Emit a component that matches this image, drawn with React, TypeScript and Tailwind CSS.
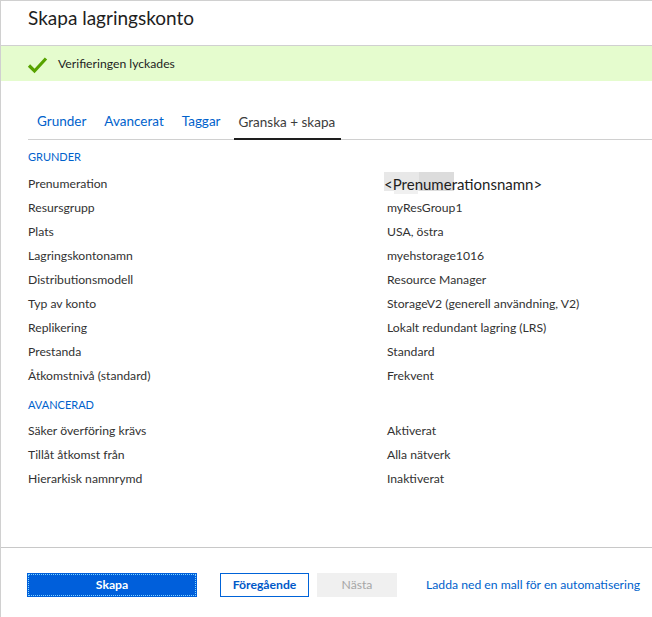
import React from 'react';

const grunder: [string, string][] = [
  ['Prenumeration', '<Prenumerationsnamn>'],
  ['Resursgrupp', 'myResGroup1'],
  ['Plats', 'USA, östra'],
  ['Lagringskontonamn', 'myehstorage1016'],
  ['Distributionsmodell', 'Resource Manager'],
  ['Typ av konto', 'StorageV2 (generell användning, V2)'],
  ['Replikering', 'Lokalt redundant lagring (LRS)'],
  ['Prestanda', 'Standard'],
  ['Åtkomstnivå (standard)', 'Frekvent'],
];

const avancerad: [string, string][] = [
  ['Säker överföring krävs', 'Aktiverat'],
  ['Tillåt åtkomst från', 'Alla nätverk'],
  ['Hierarkisk namnrymd', 'Inaktiverat'],
];

function Row({ label, value }: { label: string; value: string }) {
  const blurred = value.startsWith('<');
  return (
    <div className="flex h-6 items-center">
      <div className="w-[359px] text-[#323232]">{label}</div>
      {blurred ? (
        <span className="relative -ml-[3px] text-[15px] text-[#1e1e1e]">
          {/* redacted-looking blotch behind the name */}
          <span className="absolute left-0 top-[-1px] h-[19px] w-[35px] bg-[#e8e8e8]" />
          <span className="absolute left-[35px] top-[-1px] h-[19px] w-[35px] bg-[#dcdcdc]" />
          <span className="absolute left-[10px] top-[16px] h-[5px] w-[24px] bg-[#f0f0f0]" />
          <span className="relative">{value}</span>
        </span>
      ) : (
        <div className="text-[#323232]">{value}</div>
      )}
    </div>
  );
}

export default function App() {
  return (
    <div className="relative h-[617px] w-[652px] overflow-hidden border-l border-t border-[#d0d0d0] bg-white font-['Lato',sans-serif] text-[12.2px]">
      <div className="flex h-[45px] items-start border-b border-[#d0d0d0] pl-[27px] pt-[3px]">
        <h1 className="text-[19px] text-[#1e1e1e]">Skapa lagringskonto</h1>
      </div>

      <div className="-ml-px flex h-[35px] items-center gap-[10px] bg-[#e5fcce] pl-[27px] pt-[2px]">
        <svg width="21" height="18" viewBox="0 0 21 18">
          <path d="M2 9.5 L7.5 15 L19 2.5" fill="none" stroke="#57a300" strokeWidth="3.2" />
        </svg>
        <span className="text-[12.2px] text-[#1e1e1e]">Verifieringen lyckades</span>
      </div>

      <div className="ml-[27px] mt-[28px] flex h-[31px] items-end border-b border-[#d0d0d0] text-[13.5px]">
        <div className="flex h-full items-center px-[9px] pb-[6px] text-[#0062cc]">Grunder</div>
        <div className="flex h-full items-center px-[9px] pb-[6px] text-[#0062cc]">Avancerat</div>
        <div className="flex h-full items-center px-[9px] pb-[6px] text-[#0062cc]">Taggar</div>
        <div className="-mb-px ml-[4px] flex h-full items-center border-b-2 border-[#1e1e1e] pl-[5px] pr-[6px] pb-[4px] text-[#3c3c3c]">
          Granska + skapa
        </div>
      </div>

      <div className="pl-[27px] pt-[8px]">
        <div className="flex h-[18px] items-center text-[11px] text-[#0062cc]">GRUNDER</div>
        <div className="mt-[6px]">
          {grunder.map(([l, v]) => (
            <Row key={l} label={l} value={v} />
          ))}
        </div>
        <div className="mt-[8px] flex h-[18px] items-center text-[11px] text-[#0062cc]">AVANCERAD</div>
        <div className="mt-[5px]">
          {avancerad.map(([l, v]) => (
            <Row key={l} label={l} value={v} />
          ))}
        </div>
      </div>

      <div className="absolute bottom-0 left-0 right-0 h-[70px] border-t border-[#c8c8c8]">
        <div className="flex items-center whitespace-nowrap pl-[26px] pt-[25px]">
          <button className="h-[24px] w-[170px] bg-[#005fdb] text-[12.2px] font-bold text-white outline-1 outline-dotted outline-[#7fd4ff] -outline-offset-2">
            Skapa
          </button>
          <button className="ml-[23px] h-[24px] w-[89px] border border-[#0063d8] text-[12.2px] font-bold text-[#0058c8]">
            Föregående
          </button>
          <button className="ml-[8px] h-[24px] w-[80px] bg-[#f0f0f0] text-[12.2px] text-[#a6a6a6]">Nästa</button>
          <span className="ml-[29px] text-[12.2px] text-[#0062cc]">Ladda ned en mall för en automatisering</span>
        </div>
      </div>
    </div>
  );
}
